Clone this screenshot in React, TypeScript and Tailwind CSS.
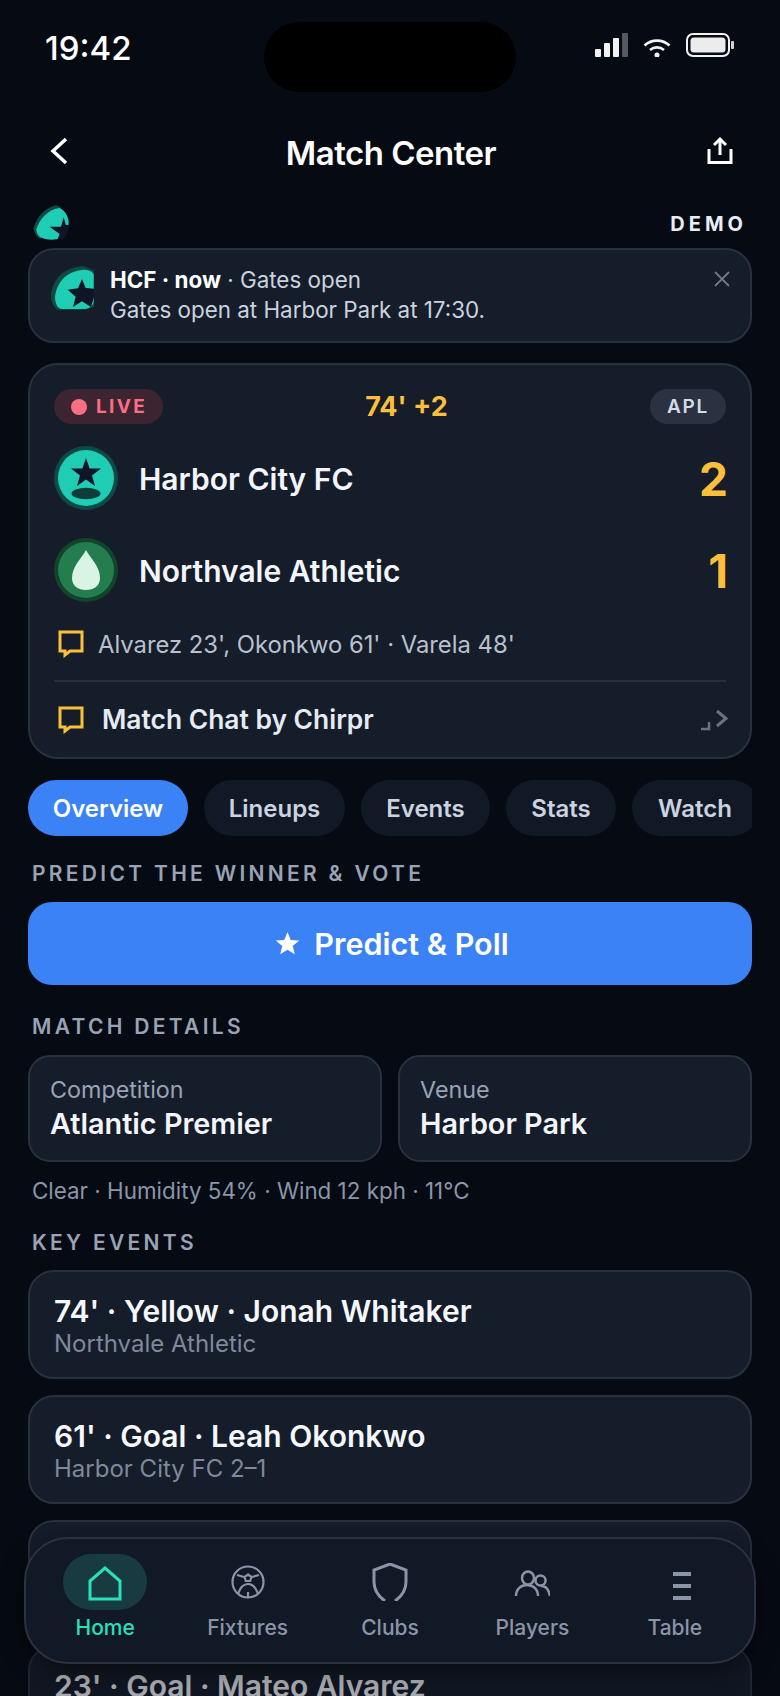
import { ReactNode } from "react";

function ChatIcon() {
  return (
    <svg width="26" height="28" viewBox="0 0 26 28" fill="none" className="shrink-0">
      <path d="M2 2h22v19H12l-5 4v-4H2z" stroke="#fbbf3c" strokeWidth="3" />
    </svg>
  );
}

function SmallLogo() {
  return (
    <svg width="36" height="36" viewBox="38 15 108 108">
      <path d="M39 85C50 50 75 22 108 16L122 22L60 118C50 112 42 100 39 85Z" fill="#0f4a45" />
      <path d="M48 88C58 55 85 28 118 24C132 30 144 48 145 66C145 88 130 108 110 118C92 121 72 119 60 112C52 106 48 98 48 88Z" fill="#1fcdb4" />
      <path d="M130 52L136 74L145 76V90L130 118L112 116L118 102L88 80L122 80Z" fill="#0d1526" />
    </svg>
  );
}

function NoticeLogo() {
  return (
    <svg width="43" height="44" viewBox="92 197 129 132">
      <path d="M92 285C96 240 125 200 190 198L221 210V320L190 328L110 328C98 318 92 305 92 285Z" fill="#0f4a45" />
      <path d="M104 290C108 250 135 212 190 208C208 208 220 215 220 225V305C218 318 205 326 190 326H125C112 326 104 310 104 290Z" fill="#1fcdb4" />
      <path d="M185 236L196 263L221 265V290L212 320L185 303L158 320L166 289L142 268L173 264Z" fill="#0d1526" />
    </svg>
  );
}

function TeamBadgeHome() {
  return (
    <svg width="64" height="64" viewBox="0 0 64 64" className="shrink-0">
      <circle cx="32" cy="32" r="32" fill="#0d4a46" />
      <circle cx="32" cy="32" r="28" fill="#1fcdb4" />
      <path d="M32 12L35.600 22.500H47L38 29.500L41 40L32 33.500L23 40L26 29.500L17 22.500H28.400Z" fill="#0d1526" />
      <ellipse cx="32" cy="47.500" rx="14.500" ry="5.800" fill="#0d3d3a" />
    </svg>
  );
}

function TeamBadgeAway() {
  return (
    <svg width="64" height="64" viewBox="0 0 64 64" className="shrink-0">
      <circle cx="32" cy="32" r="32" fill="#14432c" />
      <circle cx="32" cy="32" r="28" fill="#237d4e" />
      <path d="M32 12C36 20 46 28 46 40C46 48 40 52 32 52C24 52 18 48 18 40C18 28 28 20 32 12Z" fill="#d9f3e4" />
    </svg>
  );
}

function Label({ children }: { children: ReactNode }) {
  return (
    <div className="px-1 text-[21px] leading-[24px] font-semibold tracking-[3.3px] text-[#99a3b5]">
      {children}
    </div>
  );
}

function Tab({ label, active, clip, w }: { label: string; active?: boolean; clip?: boolean; w: string }) {
  return (
    <div
      className={
        "h-[56px] shrink-0 flex items-center rounded-[28px] pt-[1px] text-[24px] font-semibold " +
        w +
        (clip ? " pl-[26px] " : " justify-center ") +
        (active ? "bg-[#3b82f6] text-white" : "bg-[#121926] text-[#cbd2e0]")
      }
    >
      {label}
    </div>
  );
}

function InfoCard({ title, value }: { title: string; value: string }) {
  return (
    <div className="flex-1 h-[107px] rounded-[22px] border-2 border-[#29303e] bg-[#151c2a] px-[20px] pt-[20px]">
      <div className="text-[23.300px] leading-[26px] text-[#99a3b5]">{title}</div>
      <div className="mt-[4px] text-[28.800px] leading-[34px] font-semibold text-[#f3f5fa]">{value}</div>
    </div>
  );
}

function EventCard({ title, sub }: { title: string; sub: string }) {
  return (
    <div className="h-[109px] rounded-[26px] border-2 border-[#29303e] bg-[#151c2a] px-[24px] pt-[20px] shrink-0">
      <div className="text-[30px] leading-[38px] font-semibold text-[#f5f7fb]">{title}</div>
      <div className="text-[24px] leading-[28px] text-[#7f899b]">{sub}</div>
    </div>
  );
}

function NavItem({ label, active, children }: { label: string; active?: boolean; children: ReactNode }) {
  return (
    <div className="flex-1 flex flex-col items-center">
      <div className={"w-[84px] h-[56px] rounded-[28px] flex items-center justify-center " + (active ? "bg-[#173b40]" : "")}>
        {children}
      </div>
      <div className={"mt-[5px] text-[21px] leading-[26px] font-medium " + (active ? "text-[#2ae0bb]" : "text-[#8b95a7]")}>
        {label}
      </div>
    </div>
  );
}

export default function App() {
  return (
    <div className="relative w-[780px] h-[1696px] overflow-hidden bg-[#060a12] font-['Inter',sans-serif]">
      <div className="absolute left-[264px] top-[22px] w-[252px] h-[70px] rounded-[35px] bg-black" />

      {/* status bar */}
      <div className="h-[96px] flex items-start justify-between pl-[45px] pr-[46px] pt-[28px]">
        <div className="text-[33px] leading-[40px] font-medium text-white">19:42</div>
        <div className="flex items-center gap-[15px] pt-[5px]">
          <svg width="33" height="24" viewBox="0 0 33 24">
            <rect x="0" y="16" width="6" height="8" rx="1" fill="#f2f2f2" />
            <rect x="9" y="10" width="6" height="14" rx="1" fill="#f2f2f2" />
            <rect x="18" y="5" width="6" height="19" rx="1" fill="#f2f2f2" />
            <rect x="27" y="0" width="6" height="24" rx="1" fill="#55585e" />
          </svg>
          <svg width="28" height="20" viewBox="0 0 28 20" fill="none" stroke="#f2f2f2" strokeWidth="2.600" className="mt-[4px]">
            <path d="M1.500 8.500C8.500 2 19.500 2 26.500 8.500" />
            <path d="M7 13C11 9.500 17 9.500 21 13" />
            <circle cx="14" cy="18" r="1.200" fill="#f2f2f2" />
          </svg>
          <svg width="48" height="24" viewBox="0 0 48 24">
            <rect x="1" y="1" width="42" height="22" rx="6" fill="none" stroke="#f2f2f2" strokeWidth="2" />
            <rect x="4.500" y="4.500" width="35" height="15" rx="3.500" fill="#ececec" />
            <rect x="45" y="8" width="3" height="8" rx="1" fill="#d0d0d0" />
          </svg>
        </div>
      </div>

      {/* header */}
      <div className="h-[110px] flex items-start justify-between pl-[48px] pr-[47px] pt-[41px]">
        <svg width="22" height="30" viewBox="0 0 22 30" fill="none" stroke="white" strokeWidth="3.500" className="mt-[-1px]">
          <path d="M18 3L5 15L18 27" />
        </svg>
        <div className="ml-[5px] text-[33px] leading-[40px] font-semibold text-white tracking-[-0.5px] -mt-[4px]">Match Center</div>
        <svg width="26" height="28" viewBox="0 0 26 28" fill="none" stroke="white" strokeWidth="3" className="-mt-[1px]">
          <path d="M13 19V3M7 9l6-6 6 6" />
          <path d="M2 13v13.500h22V13" />
        </svg>
      </div>

      <div className="-mt-[1px] h-[43px] flex items-start justify-between pl-[33px] pr-[33px]">
        <SmallLogo />
        <div className="mt-[9px] text-[20px] leading-[20px] font-bold tracking-[4px] text-[#e8ecf4]">DEMO</div>
      </div>

      <div className="px-[28px] flex flex-col">
        {/* notification */}
        <div className="relative h-[95px] rounded-[26px] border-2 border-[#29303e] bg-[#151c2a] flex items-start pl-[21px] pt-[16px] gap-[16px]">
          <NoticeLogo />
          <div className="-mt-[1px] text-[22.400px] leading-[30px] text-[#cbd2de]">
            <div>
              <span className="font-bold text-white">HCF · now</span> · Gates open
            </div>
            <div>Gates open at Harbor Park at 17:30.</div>
          </div>
          <svg width="16" height="16" viewBox="0 0 16 16" stroke="#6f7889" strokeWidth="1.800" className="absolute right-[20px] top-[21px]">
            <path d="M1 1l14 14M15 1L1 15" />
          </svg>
        </div>

        {/* match card */}
        <div className="mt-[20px] h-[396px] rounded-[30px] border-2 border-[#29303e] bg-[#151c2a] px-[24px] pt-[24px]">
          <div className="flex items-center justify-between h-[35px]">
            <div className="w-[109px] h-[35px] rounded-full bg-[#3c2430] flex items-center pl-[17px] gap-[9px]">
              <span className="w-[16px] h-[16px] rounded-full bg-[#fb6f84]" />
              <span className="mt-[2px] text-[19px] font-bold tracking-[2.300px] text-[#fb6f84]">LIVE</span>
            </div>
            <div className="text-[27px] font-bold text-[#fbbf3c] mt-[2px]">74' +2</div>
            <div className="w-[76px] h-[35px] rounded-full bg-[#2a3140] flex items-center justify-center pt-[1px] text-[19px] font-semibold tracking-[1.800px] text-[#d6dbe6]">
              APL
            </div>
          </div>

          <div className="mt-[22px] h-[64px] flex items-center">
            <TeamBadgeHome />
            <div className="ml-[21px] mt-[3px] flex-1 text-[30px] font-semibold text-[#f3f5fa]">Harbor City FC</div>
            <div className="text-[46px] font-bold text-[#fbbf3c] mt-[3px] -mr-[2px]">2</div>
          </div>
          <div className="mt-[28px] h-[64px] flex items-center">
            <TeamBadgeAway />
            <div className="ml-[21px] mt-[3px] flex-1 text-[30px] font-semibold text-[#f3f5fa]">Northvale Athletic</div>
            <div className="text-[46px] font-bold text-[#fbbf3c] mt-[3px] -mr-[2px]">1</div>
          </div>

          <div className="mt-[28px] h-[28px] flex items-center pl-[4px] gap-[14px]">
            <ChatIcon />
            <div className="text-[23.800px] text-[#b9c1cf] mt-[2px]">Alvarez 23', Okonkwo 61' · Varela 48'</div>
          </div>
          <div className="mt-[22px] h-[2px] bg-[#272e3c]" />
          <div className="mt-[24px] h-[28px] flex items-center pl-[4px] gap-[18px]">
            <ChatIcon />
            <div className="flex-1 text-[26.400px] font-semibold text-[#e6eaf2]">Match Chat by Chirpr</div>
            <svg width="28" height="22" viewBox="0 0 28 22" fill="none" stroke="#6b7280" strokeWidth="3" className="-mt-[1px] -mr-[2px]">
              <path d="M17 2l9 7.500L17 17" />
              <path d="M1 20h8v-7" strokeWidth="2.500" />
            </svg>
          </div>
        </div>

        {/* tabs */}
        <div className="mt-[21px] flex gap-[16px] overflow-hidden">
          <Tab label="Overview" active w="w-[160px]" />
          <Tab label="Lineups" w="w-[141px]" />
          <Tab label="Events" w="w-[129px]" />
          <Tab label="Stats" w="w-[110px]" />
          <Tab label="Watch" clip w="w-[128px]" />
        </div>

        <div className="mt-[26px]">
          <Label>PREDICT THE WINNER &amp; VOTE</Label>
        </div>
        <div className="mt-[16px] h-[83px] rounded-[24px] bg-[#3b82f6] flex items-center justify-center gap-[14px] pl-[14px] text-[30.500px] font-semibold text-white">
          <svg width="25" height="25" viewBox="0 0 24 24" fill="white" className="-ml-[10px]">
            <path d="M12 1l3.100 7.600 8.200.6-6.300 5.200 2 8L12 18l-7 4.400 2-8L.7 9.200l8.200-.6z" />
          </svg>
          Predict &amp; Poll
        </div>

        <div className="mt-[30px]">
          <Label>MATCH DETAILS</Label>
        </div>
        <div className="mt-[16px] flex gap-[16px]">
          <InfoCard title="Competition" value="Atlantic Premier" />
          <InfoCard title="Venue" value="Harbor Park" />
        </div>
        <div className="mt-[15px] px-1 text-[22.400px] leading-[28px] text-[#8b95a7]">Clear · Humidity 54% · Wind 12 kph · 11°C</div>

        <div className="mt-[26px]">
          <Label>KEY EVENTS</Label>
        </div>
        <div className="mt-[15px] flex flex-col gap-[16px]">
          <EventCard title="74' · Yellow · Jonah Whitaker" sub="Northvale Athletic" />
          <EventCard title="61' · Goal · Leah Okonkwo" sub="Harbor City FC 2–1" />
          <EventCard title="48' · Goal · Nico Varela" sub="Northvale Athletic 1–1" />
          <EventCard title="23' · Goal · Mateo Alvarez" sub="Harbor City FC 1–0" />
        </div>
      </div>

      {/* bottom fade */}
      <div className="absolute left-0 right-0 bottom-0 h-[160px] bg-gradient-to-b from-[#060a1200] to-[#060a1255]" />

      {/* tab bar */}
      <div className="absolute left-[24px] top-[1537px] w-[732px] h-[127px] rounded-[44px] border-2 border-[#2b3240] bg-[#121926] shadow-[0_8px_24px_rgba(0,0,0,0.45)] flex items-start px-[8px] pt-[15px]">
        <NavItem label="Home" active>
          <svg width="36" height="36" viewBox="0 0 36 36" fill="none" stroke="#2ae0bb" strokeWidth="3" className="mt-[3px]">
            <path d="M3 33V15L18 2l15 13v18z" />
          </svg>
        </NavItem>
        <NavItem label="Fixtures">
          <svg width="34" height="34" viewBox="0 0 34 34" fill="none" stroke="#8b95a7" strokeWidth="2.200">
            <circle cx="17" cy="17" r="15.500" />
            <path d="M17 9.500l3.500 2.500-1.300 4h-4.400l-1.300-4z" />
            <path d="M6 10l7 2M28 10l-7 2M17 27v5M7 29c2-6 5-10 10-10s8 4 10 10" />
          </svg>
        </NavItem>
        <NavItem label="Clubs">
          <svg width="36" height="38" viewBox="0 0 36 38" fill="none" stroke="#8b95a7" strokeWidth="3">
            <path d="M13 38C6 33 2 26 2 19V7L18 1l16 6v12c0 7-4 14-11 19" />
          </svg>
        </NavItem>
        <NavItem label="Players">
          <svg width="36" height="30" viewBox="0 0 36 30" fill="none" stroke="#8b95a7" strokeWidth="2.500">
            <ellipse cx="14" cy="11" rx="6" ry="6.500" />
            <circle cx="26.500" cy="13.500" r="5" />
            <path d="M2 29c0-7 5-11 11-11s11 4 11 11M27 19c5 0 8 4 9 10" />
          </svg>
        </NavItem>
        <NavItem label="Table">
          <svg width="20" height="28" viewBox="0 0 20 28" fill="#8b95a7" className="ml-[12px] mt-[8px]">
            <rect x="2" y="0" width="18" height="4" />
            <rect x="2" y="12" width="18" height="4" />
            <rect x="2" y="24" width="18" height="4" />
          </svg>
        </NavItem>
      </div>
    </div>
  );
}
